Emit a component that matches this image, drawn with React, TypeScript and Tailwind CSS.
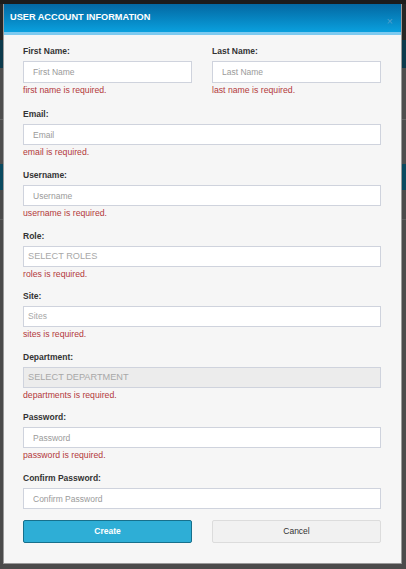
import React from "react";

const font = { fontFamily: '"Liberation Sans", Arial, sans-serif' };

function Label({ children }: { children: React.ReactNode }) {
  return <div className="text-[8.5px] leading-[10px] font-bold text-[#333]">{children}</div>;
}

function Err({ children }: { children: React.ReactNode }) {
  return <div className="mt-[2px] text-[8.7px] leading-[10px] text-[#b3393b]">{children}</div>;
}

function TextInput({ placeholder }: { placeholder: string }) {
  return (
    <input
      placeholder={placeholder}
      className="mt-[5px] block h-[21px] w-full border border-[#cfd3dd] bg-white pl-[9px] text-[8.5px] text-[#333] outline-none placeholder:text-[#9a9a9a]"
    />
  );
}

function SelectBox({ text, disabled, caps }: { text: string; disabled?: boolean; caps?: boolean }) {
  return (
    <div
      className={
        "mt-[5px] flex h-[21px] w-full items-center border border-[#cfd3dd] pl-[4px] text-[#a8a8a8] " +
        (caps ? "text-[9.2px] " : "text-[8.5px] ") +
        (disabled ? "bg-[#ececec]" : "bg-white")
      }
    >
      {text}
    </div>
  );
}

export default function App() {
  return (
    <div className="relative h-[569px] w-[406px] overflow-hidden bg-[#4b4b4b]" style={font}>
      <div className="flex flex-col">
        <div className="h-[4px] bg-[#1c1c1c]" />
        <div className="h-[36px] bg-[#262626]" />
        <div className="h-[28px] bg-[#0c3a4c]" />
        <div className="h-[52px] bg-[#4e4e4e] border-b border-[#666]" />
        <div className="h-[44px] bg-[#4e4e4e]" />
        <div className="h-[26px] bg-[#0b4a60]" />
        <div className="h-[30px] bg-[#4b4b4b] border-b border-[#5e5e5e]" />
      </div>

      <div className="absolute left-[3px] top-[4px] w-[399px] border-x border-b border-[#9a9a9a] bg-[#f6f6f6]">
        <div className="flex h-[28px] items-center justify-between bg-gradient-to-b from-[#0468a2] to-[#0aa0de] pl-[6px] pr-[8px]">
          <span className="text-[9.2px] font-bold text-white">USER ACCOUNT INFORMATION</span>
          <span className="mt-[6px] text-[11px] leading-none text-[#4f9fcc]">×</span>
        </div>
        <div className="h-[3px] bg-[#7dcaf0]" />

        <div className="pl-[19px] pr-[20px] pt-[11px] pb-[20px]">
          <div className="grid grid-cols-2 gap-x-[20px]">
            <div>
              <Label>First Name:</Label>
              <input
                placeholder="First Name"
                className="mt-[5px] block h-[22px] w-full border border-[#cfd3dd] bg-white pl-[9px] text-[8.5px] outline-none placeholder:text-[#9a9a9a]"
              />
              <Err>first name is required.</Err>
            </div>
            <div>
              <Label>Last Name:</Label>
              <input
                placeholder="Last Name"
                className="mt-[5px] block h-[22px] w-full border border-[#cfd3dd] bg-white pl-[9px] text-[8.5px] outline-none placeholder:text-[#9a9a9a]"
              />
              <Err>last name is required.</Err>
            </div>
          </div>

          <div className="mt-[14px]">
            <Label>Email:</Label>
            <TextInput placeholder="Email" />
            <Err>email is required.</Err>
          </div>

          <div className="mt-[13px]">
            <Label>Username:</Label>
            <TextInput placeholder="Username" />
            <Err>username is required.</Err>
          </div>

          <div className="mt-[13px]">
            <Label>Role:</Label>
            <SelectBox text="SELECT ROLES" caps />
            <Err>roles is required.</Err>
          </div>

          <div className="mt-[12px]">
            <Label>Site:</Label>
            <SelectBox text="Sites" />
            <Err>sites is required.</Err>
          </div>

          <div className="mt-[13px]">
            <Label>Department:</Label>
            <SelectBox text="SELECT DEPARTMENT" disabled caps />
            <Err>departments is required.</Err>
          </div>

          <div className="mt-[12px]">
            <Label>Password:</Label>
            <TextInput placeholder="Password" />
            <Err>password is required.</Err>
          </div>

          <div className="mt-[13px]">
            <Label>Confirm Password:</Label>
            <TextInput placeholder="Confirm Password" />
          </div>

          <div className="mt-[11px] grid grid-cols-2 gap-x-[20px]">
            <button className="h-[23px] rounded-[2px] border border-[#17708c] bg-[#2eaed6] text-[8.5px] font-bold text-white">
              Create
            </button>
            <button className="h-[23px] rounded-[2px] border border-[#dcdcdc] bg-[#f1f1f1] text-[8.5px] text-[#333]">
              Cancel
            </button>
          </div>
        </div>
      </div>
    </div>
  );
}
